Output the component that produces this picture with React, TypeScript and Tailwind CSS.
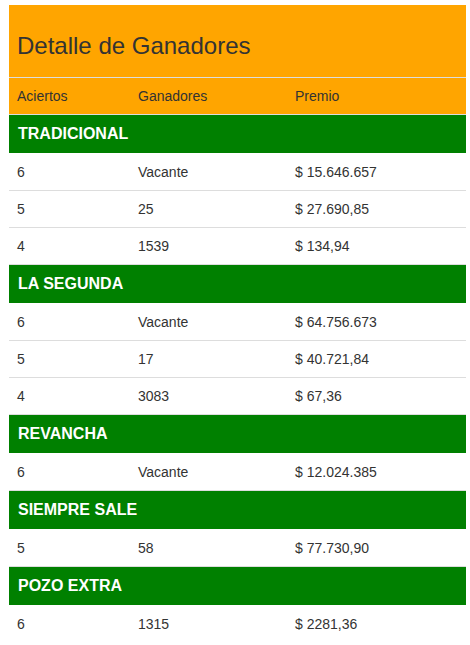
import React from "react";

type Row = [string, string, string];
const sections: { name: string; rows: Row[] }[] = [
  { name: "TRADICIONAL", rows: [["6", "Vacante", "$ 15.646.657"], ["5", "25", "$ 27.690,85"], ["4", "1539", "$ 134,94"]] },
  { name: "LA SEGUNDA", rows: [["6", "Vacante", "$ 64.756.673"], ["5", "17", "$ 40.721,84"], ["4", "3083", "$ 67,36"]] },
  { name: "REVANCHA", rows: [["6", "Vacante", "$ 12.024.385"]] },
  { name: "SIEMPRE SALE", rows: [["5", "58", "$ 77.730,90"]] },
  { name: "POZO EXTRA", rows: [["6", "1315", "$ 2281,36"]] },
];

export default function App() {
  return (
    <div className="bg-white min-h-[645px] pt-[5px] pl-[9px]" style={{ fontFamily: '"Liberation Sans", Arial, sans-serif' }}>
      <div className="w-[457px] text-[#333] text-[14px]">
        <div className="bg-[#ffa500] h-[72px] pt-[28px] pl-[8px] text-[24px] leading-[26px] text-[#333]">
          Detalle de Ganadores
        </div>
        <div className="bg-[#ffa500] border-t border-[#ddd] h-[37px] grid grid-cols-[121px_157px_179px] items-center leading-[20px]">
          <div className="px-2">Aciertos</div>
          <div className="px-2">Ganadores</div>
          <div className="px-2">Premio</div>
        </div>
        {sections.map((s) => (
          <div key={s.name}>
            <div className="border-t border-[#ddd] h-[39px]">
              <div className="bg-[#008000] h-[38px] flex items-center pl-[9px] text-white font-bold text-[16px] leading-[20px]">
                {s.name}
              </div>
            </div>
            {s.rows.map((r, i) => (
              <div key={i} className={`h-[37px] grid grid-cols-[121px_157px_179px] items-center leading-[20px] ${i === 0 ? "" : "border-t border-[#ddd]"}`}>
                <div className="px-2">{r[0]}</div>
                <div className="px-2">{r[1]}</div>
                <div className="px-2">{r[2]}</div>
              </div>
            ))}
          </div>
        ))}
      </div>
    </div>
  );
}
